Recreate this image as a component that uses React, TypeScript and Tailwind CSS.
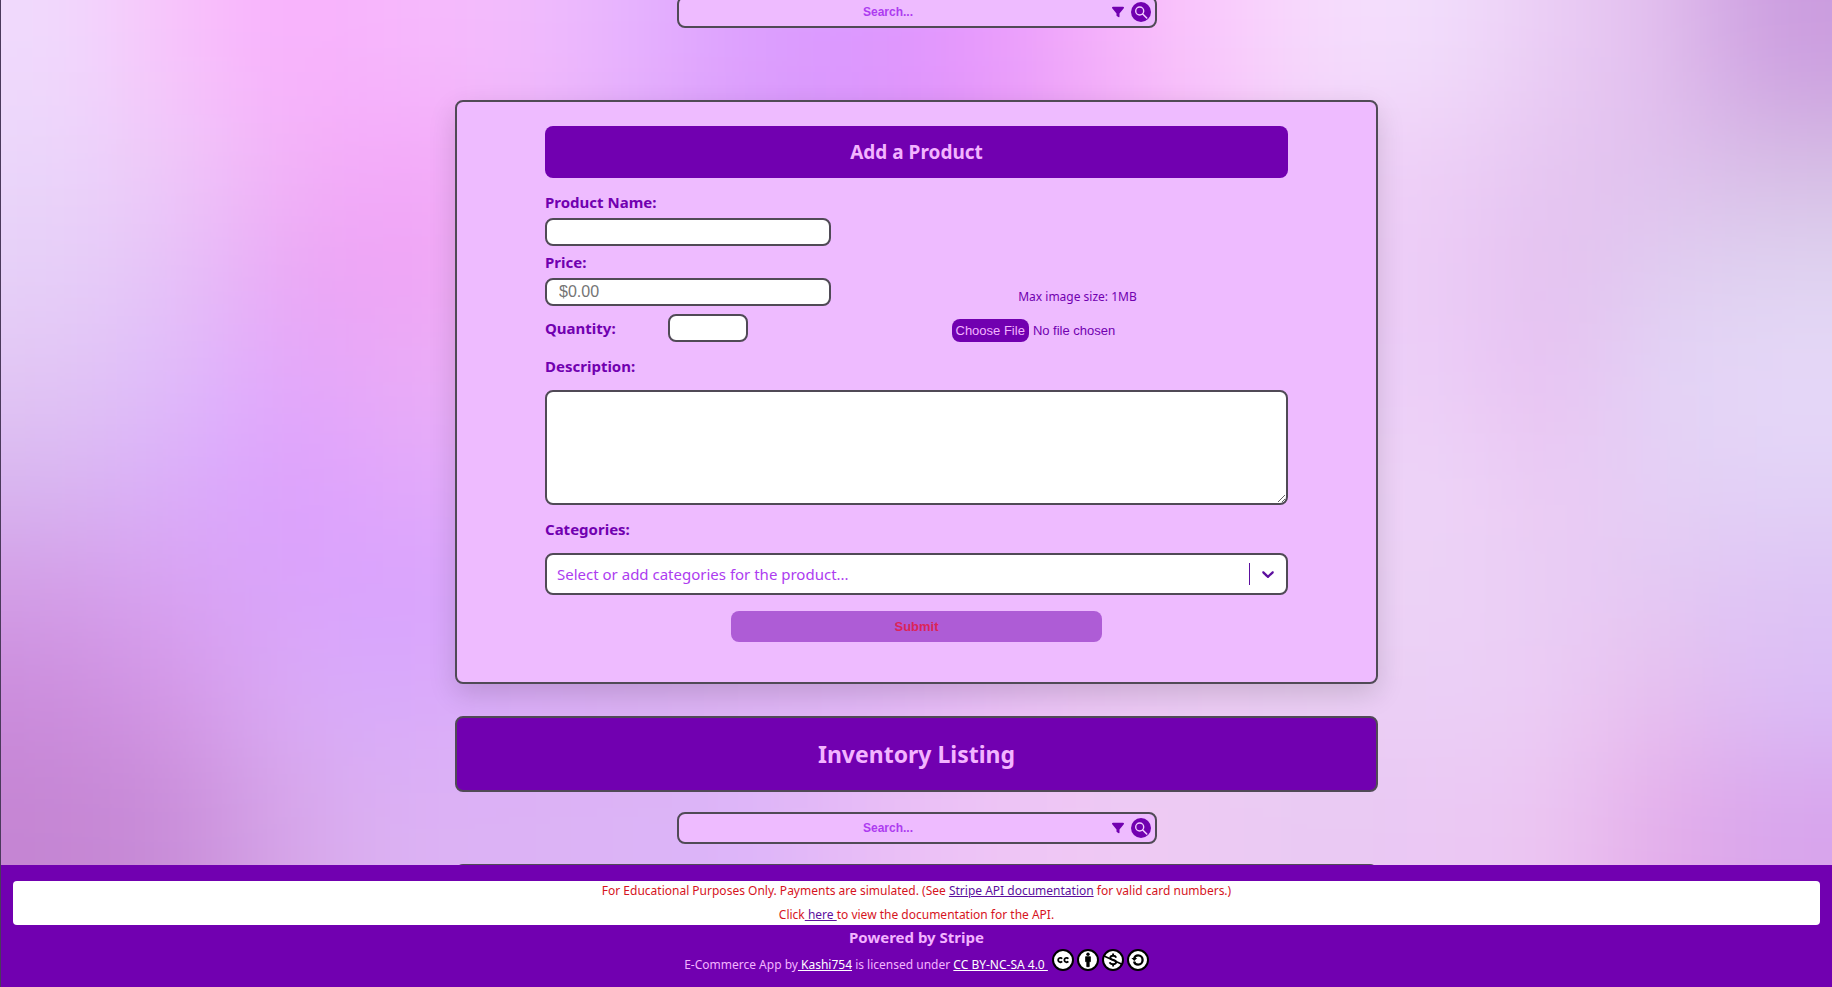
import React from "react";
import { FaFilter } from "react-icons/fa6";

const backdrop = [
  ["#f0dafc","#f8c4fb","#f8b0fc","#f7b8fc","#f2bdfc","#e6b4fe","#dca0fe","#db98ff","#e698fd","#f4aefa","#fbc8fc","#f6dcfc","#f2dffc","#ebcdf5","#e2bfee","#cb9cdf"],
  ["#ebd6fa","#efc8f9","#f2b2f8","#f4a8f9","#f0b4fa","#e4a8fb","#da98fb","#da92fa","#e490f6","#efa6f6","#f5bcf8","#f0d0f8","#eed0f7","#e6c6f1","#e0c0ee","#d6bce4"],
  ["#e6d0f8","#e6c2f8","#eaa8f5","#f0a2f4","#f0b0f8","#e4a8fb","#da98fb","#da92fa","#e490f6","#efa6f6","#f5bcf8","#f0ccf8","#eccdf7","#e4c0f0","#e0cdf0","#dfd3f0"],
  ["#e2c6f4","#dfbcfb","#e2a6fb","#eaacf6","#ecb0f8","#e4a8fb","#dea8fb","#deaafa","#e4a8f6","#ecb6f6","#f0c4f8","#eeccf8","#ecd0f8","#e8c0f1","#e3d4f6","#e6d8f8"],
  ["#d8b6f0","#dbaefa","#dca0fd","#e2a8fb","#e2aefa","#e0acfb","#deacfb","#deaefa","#e4b0f6","#ecbcf6","#eec6f6","#eed0f6","#eed6f8","#ebc9f3","#e4d0f5","#e2d2f6"],
  ["#d39ce6","#d8a2f2","#daa4fb","#d9a2fe","#daa8fb","#daacf8","#dcaef8","#deb0f8","#e4b6f6","#eabff6","#ecc8f4","#ecd0f4","#edd3f7","#eaccf4","#e4c8f3","#dec3f4"],
  ["#cb8cdc","#d497e6","#daacf6","#d9aafc","#dbaef8","#dab0f2","#deb4f2","#e0b6f6","#e8bcf6","#eac6f4","#ecccf4","#ebcff4","#ebd0f6","#ebcdf5","#e8bdee","#dbbdf6"],
  ["#c585d3","#c88cd8","#d7a6e9","#dcb2f4","#dcb2f5","#dcb4f6","#dcb4fa","#e8bcf6","#eec4f6","#efc8f4","#edcbf3","#e9c9f3","#ebc8f4","#ecc6f2","#e4adea","#d8a4ec"],
];

const clamp = (n: number, max: number) => Math.max(0, Math.min(max, n));

function Backdrop() {
  const cells = [];
  for (let r = -2; r < 10; r++) {
    for (let c = -2; c < 18; c++) {
      cells.push(
        <rect key={`${r}:${c}`} x={c} y={r} width="1.02" height="1.02" fill={backdrop[clamp(r, 7)][clamp(c, 15)]} />
      );
    }
  }
  return (
    <svg aria-hidden="true" className="absolute inset-0 h-full w-full" viewBox="0 0 16 8" preserveAspectRatio="none">
      <defs>
        <filter id="soften" filterUnits="userSpaceOnUse" x="-2" y="-2" width="20" height="12" colorInterpolationFilters="sRGB">
          <feGaussianBlur stdDeviation="0.5" />
        </filter>
      </defs>
      <g filter="url(#soften)">{cells}</g>
    </svg>
  );
}

function SearchBar({ label }: { label: string }) {
  return (
    <form
      role="search"
      className="flex h-8 w-full max-w-[480px] shrink-0 items-center rounded-lg border-2 border-[#504a56] bg-[#eebbff] pr-1"
    >
      <input
        type="text"
        aria-label={label}
        placeholder="Search..."
        className="min-w-0 flex-1 bg-transparent text-center font-['Liberation_Sans',sans-serif] text-xs font-bold text-[#7100b0] outline-none placeholder:text-[#ad3cf0]"
      />
      <button type="button" aria-label="Filter" className="ml-3.5 text-[#7100b0]">
        <FaFilter size={12} />
      </button>
      <button type="submit" aria-label="Search" className="ml-[7px] size-5">
        <svg viewBox="0 0 20 20" className="size-5" fill="none">
          <circle cx="10" cy="10" r="10" fill="#7100b0" />
          <circle cx="8.7" cy="9" r="4" stroke="#f3ccff" strokeWidth="1.4" />
          <path d="M11.7 12l4 4" stroke="#f3ccff" strokeWidth="1.6" strokeLinecap="round" />
        </svg>
      </button>
    </form>
  );
}

const field = "rounded-lg border-2 border-[#504a56] bg-white outline-none";
const label = "font-bold text-[#7100b0]";

function ProductForm() {
  return (
    <form className="flex w-full flex-col rounded-lg border-2 border-[#504a56] bg-[#eebbff] px-[88px] pt-6 pb-10 shadow-[0_10px_28px_rgba(0,0,0,0.14)]">
      <h2 className="rounded-lg bg-[#7100b0] text-center text-[19px] leading-[52px] font-bold text-[#f3b4ff]">Add a Product</h2>
      <div className="mt-3 flex gap-9">
        <div className="flex w-[286px] flex-col">
          <label htmlFor="name" className={`${label} leading-6`}>Product Name:</label>
          <input id="name" type="text" className={`${field} mt-1 h-7 px-3`} />
          <label htmlFor="price" className={`${label} mt-1 leading-6`}>Price:</label>
          <input
            id="price"
            type="text"
            placeholder="$0.00"
            className={`${field} mt-1 h-7 px-3 font-['Liberation_Sans',sans-serif] text-base placeholder:text-[#757575]`}
          />
          <div className="mt-2 flex items-center">
            <label htmlFor="quantity" className={`${label} w-[123px]`}>Quantity:</label>
            <input id="quantity" type="text" inputMode="numeric" className={`${field} h-7 w-20 px-3`} />
          </div>
        </div>
        <div className="flex flex-1 flex-col items-center justify-end">
          <label htmlFor="image" className="mb-3 text-xs leading-5 text-[#7100b0]">Max image size: 1MB</label>
          <input
            id="image"
            type="file"
            className="h-[23px] w-[252px] font-['Liberation_Sans',sans-serif] text-[13px] text-[#7100b0] file:mr-1 file:h-[23px] file:rounded-lg file:bg-[#7100b0] file:px-1 file:text-[#f3b4ff]"
          />
        </div>
      </div>
      <label htmlFor="description" className={`${label} mt-3 leading-6`}>Description:</label>
      <textarea id="description" className={`${field} mt-3 h-[115px] p-2`} />
      <label htmlFor="categories" className={`${label} mt-3 leading-6`}>Categories:</label>
      <div className={`${field} mt-3 flex h-[42px] items-center`}>
        <select
          id="categories"
          defaultValue=""
          className="h-full min-w-0 flex-1 appearance-none bg-transparent pl-2.5 text-[#ad3cf0] outline-none"
        >
          <option value="">Select or add categories for the product...</option>
        </select>
        <span className="h-[22px] w-px bg-[#5c0f9e]" />
        <svg viewBox="0 0 20 20" className="mx-2 size-5" fill="#5c0f9e" aria-hidden="true">
          <path d="M4.516 7.548c0.436-0.446 1.043-0.481 1.576 0l3.908 3.747 3.908-3.747c0.533-0.481 1.141-0.446 1.574 0 0.436 0.445 0.408 1.197 0 1.615-0.406 0.418-4.695 4.502-4.695 4.502-0.217 0.223-0.502 0.335-0.787 0.335s-0.57-0.112-0.789-0.335c0 0-4.287-4.084-4.695-4.502s-0.436-1.17 0-1.615z" />
        </svg>
      </div>
      <button
        type="submit"
        className="mt-4 h-[31px] w-1/2 self-center rounded-lg bg-[#ae5cd6] font-['Liberation_Sans',sans-serif] text-[13px] font-bold text-[#dc2458]"
      >
        Submit
      </button>
    </form>
  );
}

function Badge({ children }: { children: React.ReactNode }) {
  return (
    <svg viewBox="0 0 22 22" className="size-[22px]" fill="none" stroke="#000" aria-hidden="true">
      <circle cx="11" cy="11" r="10" fill="#fff" strokeWidth="2" />
      {children}
    </svg>
  );
}

function LicenseBadges() {
  return (
    <span className="ml-1 flex gap-[3px]">
      <Badge>
        <path d="M10.1 9.700a2.200 2.200 0 1 0 0 2.700M16.300 9.700a2.200 2.200 0 1 0 0 2.700" strokeWidth="1.800" />
      </Badge>
      <Badge>
        <circle cx="11" cy="5.3" r="1.700" fill="#000" stroke="none" />
        <path d="M8.600 7.700h4.800v5h-1.200v5H9.800v-5H8.600z" fill="#000" stroke="#000" strokeWidth="0.8" strokeLinejoin="round" />
      </Badge>
      <Badge>
        <path d="M14.200 8.600c-.5-1.200-1.600-1.900-3.100-1.900-1.600 0-2.800.8-2.800 2 0 2.900 5.800 1.600 5.800 4.400 0 1.400-1.400 2.200-3 2.200s-2.900-.7-3.400-2.100M11.100 4.400v2.300M11.100 15.200v2.400" strokeWidth="1.900" />
        <path d="M2 7l18 8.200" strokeWidth="1.700" />
      </Badge>
      <Badge>
        <path d="M7.200 9.400c.5-1.900 2-3 3.900-3 2.700 0 4.500 2 4.500 4.600s-1.900 4.700-4.500 4.700c-2.100 0-3.600-1.200-4-3.200" strokeWidth="2.300" />
        <path d="M4.400 9h5.800L7.300 12.100z" fill="#000" stroke="none" />
      </Badge>
    </span>
  );
}

function Footer() {
  return (
    <footer className="relative flex shrink-0 flex-col items-center bg-[#7100b0] px-3 pt-4 pb-2 text-xs text-[#f3b4ff]">
      <div className="w-full rounded bg-white text-center text-[#d6141e]">
        <p className="leading-5">
          For Educational Purposes Only. Payments are simulated. (See{" "}
          <a href="#stripe-docs" className="text-[#5c0f9e] underline">Stripe API documentation</a> for valid card numbers.)
        </p>
        <p className="mt-1 leading-5">
          Click<a href="#api-docs" className="text-[#5c0f9e] underline"> here </a>to view the documentation for the API.
        </p>
      </div>
      <p className="text-[15px] leading-6 font-bold">Powered by Stripe</p>
      <div className="flex h-[30px]">
        <p className="pt-1.5 leading-5 whitespace-pre">
          E-Commerce App by<a href="#author" className="text-white underline"> Kashi754</a> is licensed under{" "}
          <a href="#license" className="text-white underline">{"CC BY-NC-SA 4.0 "}</a>
        </p>
        <LicenseBadges />
      </div>
    </footer>
  );
}

export default function App() {
  return (
    <div className="flex h-screen flex-col overflow-hidden border-l border-[#4b3a5c] font-['Noto_Sans',sans-serif] text-[15px]">
      <main className="relative min-h-0 flex-1 overflow-hidden">
        <Backdrop />
        <div className="relative mx-auto -mt-1 flex w-full max-w-[923px] flex-col items-center">
          <SearchBar label="Search products" />
          <div className="mt-[72px] w-full">
            <ProductForm />
          </div>
          <h1 className="mt-8 w-full rounded-lg border-2 border-[#504a56] bg-[#7100b0] text-center text-[23px] leading-[72px] font-bold text-[#f3b4ff]">
            Inventory Listing
          </h1>
          <div className="mt-5 flex w-full justify-center">
            <SearchBar label="Search inventory" />
          </div>
          <section aria-label="Inventory" className="mt-5 h-40 w-full rounded-lg border-2 border-[#504a56] bg-[#eebbff]" />
        </div>
      </main>
      <Footer />
    </div>
  );
}
